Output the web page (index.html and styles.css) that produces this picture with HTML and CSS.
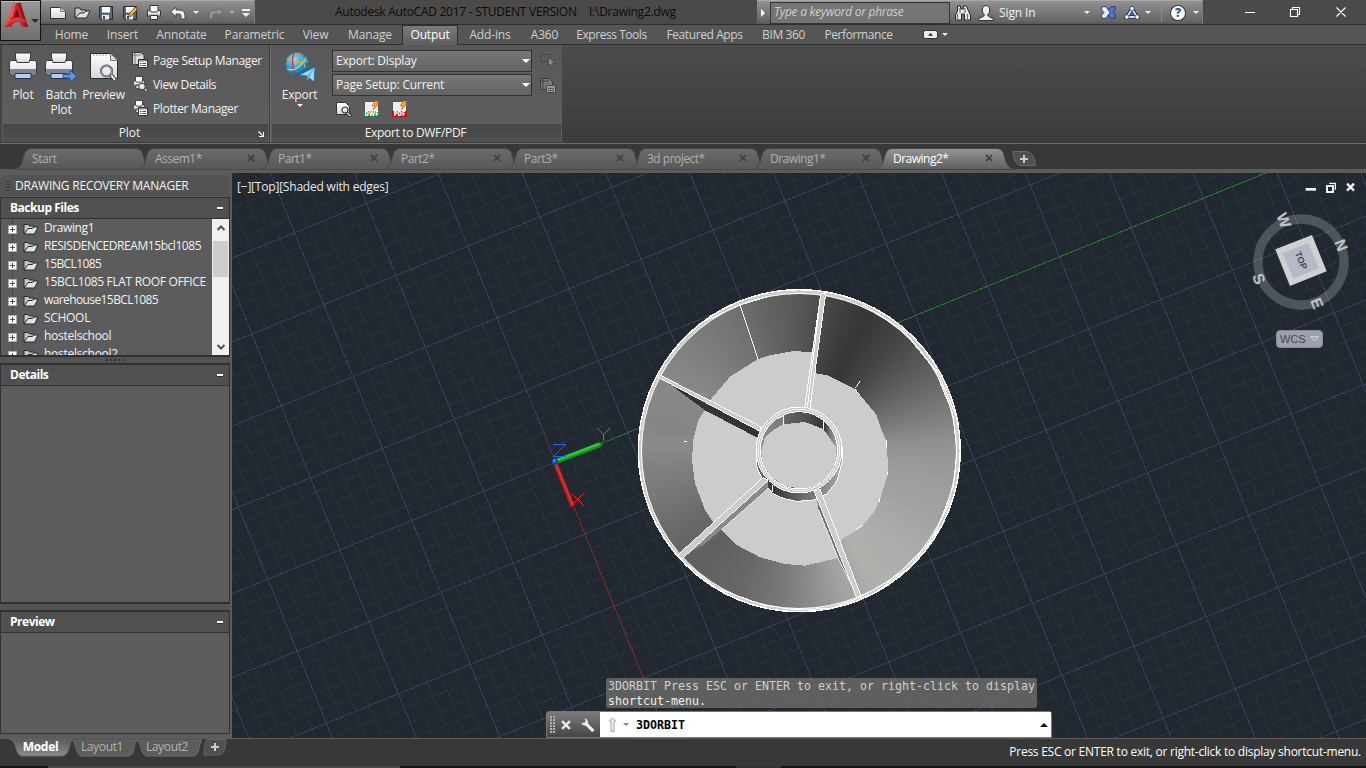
FILE: index.html
```html
<!DOCTYPE html>
<html lang="en">
<head>
<meta charset="utf-8">
<title>Autodesk AutoCAD 2017</title>
<link rel="stylesheet" href="styles.css">
</head>
<body>
<svg class="defs" width="0" height="0">
  <defs>
    <linearGradient id="paper" x1="0" y1="0" x2="0" y2="1"><stop offset="0" stop-color="#fff"/><stop offset="1" stop-color="#d4d6dc"/></linearGradient>
    <linearGradient id="tabfill" x1="0" y1="0" x2="0" y2="1"><stop offset="0" stop-color="#6b6b6b"/><stop offset="1" stop-color="#585858"/></linearGradient>
    <linearGradient id="tabon" x1="0" y1="0" x2="0" y2="1"><stop offset="0" stop-color="#959595"/><stop offset="1" stop-color="#5f5f5f"/></linearGradient>
    <linearGradient id="tabbot" x1="0" y1="0" x2="0" y2="1"><stop offset="0" stop-color="#5a5a5a"/><stop offset="1" stop-color="#8c8c8c"/></linearGradient>
    <symbol id="printer" viewBox="0 0 28 28">
      <path d="M2.500 8.500h23q2 0 2 2.500v9q0 3-3 3h-21q-3 0-3-3v-9q0-2.500 2-2.500z" fill="url(#paper)" stroke="#3a3a3a"/>
      <path d="M1 17h26v3q0 2.500-2.500 2.500h-21Q1 22.500 1 20z" fill="#7d868f"/>
      <path d="M6.500 1h15v5l-1.500 4.500H8L6.500 6z" fill="url(#paper)" stroke="#3a3a3a"/>
      <path d="M6 21.500h16v5H6z" fill="#b3cff7" stroke="#2c3440"/>
    </symbol>
    <symbol id="printer-s" viewBox="0 0 16 16">
      <path d="M1.500 5.500h13v6h-13z" fill="#e4e6ea" stroke="#333"/>
      <path d="M2 9.500h12v2H2z" fill="#8b939b"/>
      <path d="M4 .5h8v5l-1 1.500H5L4 5.500z" fill="#fff" stroke="#333"/>
      <path d="M4.500 10.500h7v4h-7z" fill="#e8f0ff" stroke="#333"/>
    </symbol>
    <symbol id="folder" viewBox="0 0 16 12">
      <path d="M1 11V1.500h4l1.500 1.500H11v3" fill="#c4c8ce" stroke="#26282c"/>
      <path d="M1.200 11 5 5.500h4L11 4h4l-3.500 7z" fill="#dde0e5" stroke="#26282c"/>
    </symbol>
    <symbol id="x" viewBox="0 0 9 9"><path d="M1 1l7 7M8 1l-7 7" stroke="currentColor" stroke-width="2"/></symbol>
  </defs>
</svg>

<div class="app">
  <header class="titlebar">
    <div class="qat">
      <svg class="ic" viewBox="0 0 16 16"><path d="M.5 2.500h10l5 4v7H.5z" fill="url(#paper)" stroke="#333"/><path d="M10.500 2.500v4h5" fill="#ccc" stroke="#777"/></svg>
      <svg class="ic" viewBox="0 0 16 16"><path d="M1 13V3h5l1 2h5v3" fill="#c8ccd2" stroke="#26282c"/><path d="M1 13 6 8h4l2-2h4l-3.500 7z" fill="#dfe2e7" stroke="#26282c"/></svg>
      <svg class="ic" viewBox="0 0 16 16"><path d="M1.500 1.500h13v13h-12l-1-1z" fill="#5a6678" stroke="#242a34"/><path d="M4 2h8v5.500H4z" fill="#fff"/><path d="M4 10h7v4.500H4z" fill="#e8eaee"/><path d="M5 11h2v3H5z" fill="#3a4454"/></svg>
      <svg class="ic" viewBox="0 0 16 16"><path d="M1.500 1.500h13v13h-12l-1-1z" fill="#5a6678" stroke="#242a34"/><path d="M4 2h8v5.500H4z" fill="#fff"/><path d="M4 10h7v4.500H4z" fill="#e8eaee"/><path d="M5 11h2v3H5z" fill="#3a4454"/><path d="M7 9.500 13 2l2.500 2L9.500 11 7 11.500z" fill="#f3b23c" stroke="#5c3d10" stroke-width=".8"/><path d="m13 2 1-1 2 1.600-.8 1.400z" fill="#c33"/></svg>
      <svg class="ic"><use href="#printer-s"/></svg>
      <svg class="ic" viewBox="0 0 16 16"><path d="M.8 6.500 6 2v3h4q5 .5 5 5v4h-4v-3q0-2-2-2H6v3z" fill="#eef0f3" stroke="#444"/></svg>
      <i class="car c1"></i>
      <svg class="ic redo" viewBox="0 0 16 16"><path d="M15.200 6.500 10 2v3H6q-5 .5-5 5v4h4v-3q0-2 2-2h3v3z" fill="#929292" stroke="#666"/></svg>
      <i class="car c2"></i>
      <span class="more"><b></b><i class="car"></i></span>
    </div>
    <div class="caption"><span class="cap1">Autodesk AutoCAD 2017 - STUDENT VERSION</span><span class="cap2">I:\Drawing2.dwg</span></div>
    <div class="infocenter">
      <i class="right-tri"></i>
      <div class="search">Type a keyword or phrase</div>
      <svg class="bino" viewBox="0 0 17 16"><path d="M3.500 1h3v3h3V1h3l2 5 2 4v5h-6V9h-3v6h-6v-5l2-4z" fill="#e8e8ea" stroke="#26282c"/><path d="M3.500 9v5M6 3v5M11 3v5M13.500 9v5" stroke="#6a6c70" stroke-width="1.200"/></svg>
      <svg class="user" viewBox="0 0 16 16"><path d="M8 .6q3.800 0 3.800 4.400 0 3-2 4.600v1q.8 1.200 5.600 3v2H.6v-2q4.800-1.800 5.600-3v-1q-2-1.600-2-4.600Q4.200.6 8 .6z" fill="#eceef4" stroke="#26282c"/></svg>
      <span class="sign">Sign In</span>
      <i class="car c3"></i>
      <svg class="exch" viewBox="0 0 15 13"><path d="M14.300.7H10L5 6.500l5 5.800h4.300V9L12 6.500 14.300 4z" fill="#4a78d0" stroke="#1c3472" stroke-width=".9"/><path d="M.7.7H5l4 5.800-4 5.800H.7V9L3 6.500.7 4z" fill="#eceef6" stroke="#1c3472" stroke-width=".9"/></svg>
      <svg class="a360" viewBox="0 0 16 14"><path d="M8 3 3 11h10z" fill="none" stroke="#26356a" stroke-width="4"/><path d="M8 3 3 11h10z" fill="none" stroke="#dfe3f2" stroke-width="1.800"/><circle cx="8" cy="2.600" r="2.200" fill="#fff" stroke="#26356a" stroke-width=".8"/><circle cx="2.800" cy="11" r="2.200" fill="#fff" stroke="#26356a" stroke-width=".8"/><circle cx="13.200" cy="11" r="2.200" fill="#fff" stroke="#26356a" stroke-width=".8"/></svg>
      <i class="car c4"></i>
      <b class="sep"></b>
      <span class="help">?</span>
      <i class="car c5"></i>
    </div>
    <div class="winbtns">
      <svg viewBox="0 0 102 12"><path d="M0 6.500h10M45.500 3.500h7v7h-7zM47.500 3.500v-2h7v7h-2M91.500 1.500l9 9M100.500 1.500l-9 9" fill="none" stroke="#fff" stroke-width="1.100"/></svg>
    </div>
  </header>

  <nav class="ribbon-tabs">
    <span>Home</span><span>Insert</span><span>Annotate</span><span>Parametric</span><span>View</span><span>Manage</span><span class="on">Output</span><span>Add-ins</span><span>A360</span><span>Express Tools</span><span>Featured Apps</span><span>BIM 360</span><span>Performance</span>
    <svg class="mini" viewBox="0 0 15 9"><rect x=".5" y=".5" width="14" height="8" rx="2" fill="#eceef2" stroke="#2c3038"/><path d="M5 5.800h5L7.500 3z" fill="#222"/></svg><i class="car"></i>
  </nav>

  <section class="ribbon">
    <div class="panel plot">
      <div class="pbody">
        <div class="big b1"><svg><use href="#printer"/></svg><span>Plot</span></div>
        <div class="big b2"><svg viewBox="0 0 32 30"><use href="#printer" x="0" y="0" width="28" height="28"/><path d="M18 22.500h7v-4.500l6.500 6.500-6.500 6v-4.500h-7z" fill="#5a98f5" stroke="#24407a" stroke-width=".8"/></svg><span>Batch<br>Plot</span></div>
        <div class="big b3"><svg viewBox="0 0 28 28"><path d="M.5 1.500h20l7 7v18H.5z" fill="url(#paper)" stroke="#2b2b2b"/><path d="M20.500 1.500v7h7" fill="#ddd" stroke="#777"/><path d="M4 2v2M7 2v2M10 2v2M13 2v2M16 2v2" stroke="#999"/><path d="m20 22 5 6" stroke="#333" stroke-width="4"/><path d="m20 22 5 6" stroke="#eee" stroke-width="2"/><circle cx="16.500" cy="19" r="5.500" fill="#e3eaf3" stroke="#3a3a3a" stroke-width="2"/><circle cx="16.500" cy="19" r="5.500" fill="none" stroke="#ccc" stroke-width=".8"/></svg><span>Preview</span></div>
        <ul class="cmds">
          <li><svg viewBox="0 0 16 16"><path d="M.5.5H9l3 3v9H.5z" fill="#d9dbe0" stroke="#333"/><path d="M3 1v12M1 3h8" stroke="#777"/><path d="M6.500 7.500h9v8h-9z" fill="#fff" stroke="#333"/><path d="M7 8h8v1.500H7z" fill="#7c8aa0"/><path d="M8 11.500h1.500M8 13.500h1.500M10.500 11.500H14M10.500 13.500H14" stroke="#445"/></svg><span class="w1">Page Setup Manager</span></li>
          <li><svg viewBox="0 0 16 16"><use href="#printer-s" width="14" height="14"/><path d="m12 12 3.500 3.500" stroke="#222" stroke-width="2.500"/><path d="m12 12 3 3" stroke="#eee" stroke-width="1.200"/><circle cx="10" cy="10.500" r="3.300" fill="#e3eaf3" stroke="#333"/></svg><span class="w2">View Details</span></li>
          <li><svg viewBox="0 0 16 16"><use href="#printer-s" width="14" height="14"/><path d="M6.500 7.500h9v8h-9z" fill="#fff" stroke="#333"/><path d="M7 8h8v1.500H7z" fill="#7c8aa0"/><path d="M8 11.500h1.500M8 13.500h1.500M10.500 11.500H14M10.500 13.500H14" stroke="#445"/></svg><span class="w3">Plotter Manager</span></li>
        </ul>
      </div>
      <div class="ptitle"><span>Plot</span><svg class="launch" viewBox="0 0 6 6"><path d="M.5.5l4 4M5.500 1v4.500H1" fill="none" stroke="#fff" stroke-width="1.200"/></svg></div>
    </div>
    <div class="panel export">
      <div class="pbody">
        <div class="big b4"><svg viewBox="0 0 30 30"><defs><radialGradient id="globe" cx=".35" cy=".3" r=".8"><stop offset="0" stop-color="#8fdcf8"/><stop offset=".5" stop-color="#2d9fdc"/><stop offset="1" stop-color="#0d4f8c"/></radialGradient></defs><circle cx="12.500" cy="12" r="11.500" fill="url(#globe)"/><path d="M2 6q9 7 21 3" fill="none" stroke="#f6a02c" stroke-width="1.300"/><path d="M9 1q-4 11 2 22" fill="none" stroke="#e02a2a" stroke-width="1.400"/><path d="M2 17q10 4 19-11" fill="none" stroke="#d8e23c" stroke-width="1.300"/><path d="M9 2Q18 0 20 16" fill="none" stroke="#f6a02c"/><path d="M30 15 14 23l8 1 7 6z" fill="#9bdcf5" stroke="#1b6c9c" stroke-width=".8"/><path d="m30 15-8 9v5z" fill="#4fb4e0"/></svg><span>Export</span><i class="car"></i></div>
        <div class="combos">
          <div class="row"><div class="combo"><span class="w4">Export: Display</span><i class="car"></i></div><svg viewBox="0 0 16 16"><path d="M.5 1.500h10v7H.5z" fill="none" stroke="#3e3e3e" stroke-dasharray="2 1"/><path d="M8.500 4v9l2-2 1.500 3.500 1.500-.7L12 10.500h3z" fill="#8c8c8c" stroke="#484848" stroke-width=".8"/></svg></div>
          <div class="row"><div class="combo"><span class="w5">Page Setup: Current</span><i class="car"></i></div><svg viewBox="0 0 16 16"><path d="M.5 1.500h9l3 3v8H.5z" fill="#777" stroke="#3e3e3e"/><path d="M3 2v11M1 4h8" stroke="#444"/><path d="M6.500 8.500h9v7h-9z" fill="#999" stroke="#484848"/><path d="M8 11.500h6M8 13.500h6" stroke="#555"/></svg></div>
          <div class="row small">
            <svg viewBox="0 0 16 16"><path d="M.5 1.500h9l4 4v8H.5z" fill="url(#paper)" stroke="#333"/><path d="m10 11 5 4.500" stroke="#222" stroke-width="2.500"/><path d="m10 11 4.500 4" stroke="#eee" stroke-width="1.200"/><circle cx="9" cy="9" r="3" fill="#e3eaf3" stroke="#333" stroke-width="1.200"/></svg>
            <svg viewBox="0 0 16 16"><path d="M.5.5h14v10H.5z" fill="#eee" stroke="#555"/><path d="m11 0-3 5h3l-2 4 6-6h-3l3-3z" fill="#f7a928" stroke="#a85f10" stroke-width=".6"/><path d="M0 10h15v6H0z" fill="#16794a"/><text x="7.500" y="15.200" font-size="6" class="tag">DWF</text></svg>
            <svg viewBox="0 0 16 16"><path d="M.5.5h14v10H.5z" fill="#eee" stroke="#555"/><path d="m11 0-3 5h3l-2 4 6-6h-3l3-3z" fill="#f7a928" stroke="#a85f10" stroke-width=".6"/><path d="M0 10h15v6H0z" fill="#c00d12"/><text x="7.500" y="15.200" font-size="6" class="tag">PDF</text></svg>
          </div>
        </div>
      </div>
      <div class="ptitle"><span class="w6">Export to DWF/PDF</span></div>
    </div>
  </section>

  <div class="appmenu">
    <svg viewBox="0 0 24 28"><path d="M0 25 8.500 1h7L23 25h-6.500l-1.400-5q-3.600-1-7.200 2L6.500 25z" fill="#c8252b"/><path d="M0 25 8.500 1H11L7.600 14z" fill="#ea5a58"/><path d="M9 16l3-9.500 2.300 8.500q-3-.6-5.300 1z" fill="#6e1015"/><path d="m15.500 1 7.500 24h-3L13 1z" fill="#93161b"/><path d="M3 20q7-7 17-2l.6 2.500Q11 16.500 2 23z" fill="#dc3a3a"/></svg>
    <i class="car"></i>
  </div>

  <div class="doctabs">
    <div class="dt"><svg class="shape" viewBox="0 0 140 24"><path class="tp" d="M0 23.500C8 22 8 16 10 9Q12 2.500 17 2.500H121Q128 2.500 129 9C131 17 133 22 140 23.500z"/></svg><span class="t0">Start</span></div>
    <div class="dt"><svg class="shape" viewBox="0 0 140 24"><path class="tp" d="M0 23.500C8 22 8 16 10 9Q12 2.500 17 2.500H121Q128 2.500 129 9C131 17 133 22 140 23.500z"/></svg><span>Assem1*</span><svg class="cl"><use href="#x"/></svg></div>
    <div class="dt"><svg class="shape" viewBox="0 0 140 24"><path class="tp" d="M0 23.500C8 22 8 16 10 9Q12 2.500 17 2.500H121Q128 2.500 129 9C131 17 133 22 140 23.500z"/></svg><span>Part1*</span><svg class="cl"><use href="#x"/></svg></div>
    <div class="dt"><svg class="shape" viewBox="0 0 140 24"><path class="tp" d="M0 23.500C8 22 8 16 10 9Q12 2.500 17 2.500H121Q128 2.500 129 9C131 17 133 22 140 23.500z"/></svg><span>Part2*</span><svg class="cl"><use href="#x"/></svg></div>
    <div class="dt"><svg class="shape" viewBox="0 0 140 24"><path class="tp" d="M0 23.500C8 22 8 16 10 9Q12 2.500 17 2.500H121Q128 2.500 129 9C131 17 133 22 140 23.500z"/></svg><span>Part3*</span><svg class="cl"><use href="#x"/></svg></div>
    <div class="dt"><svg class="shape" viewBox="0 0 140 24"><path class="tp" d="M0 23.500C8 22 8 16 10 9Q12 2.500 17 2.500H121Q128 2.500 129 9C131 17 133 22 140 23.500z"/></svg><span>3d project*</span><svg class="cl"><use href="#x"/></svg></div>
    <div class="dt"><svg class="shape" viewBox="0 0 140 24"><path class="tp" d="M0 23.500C8 22 8 16 10 9Q12 2.500 17 2.500H121Q128 2.500 129 9C131 17 133 22 140 23.500z"/></svg><span>Drawing1*</span><svg class="cl"><use href="#x"/></svg></div>
    <div class="dt active"><svg class="shape" viewBox="0 0 140 24"><path class="tp" d="M0 23.500C8 22 8 16 10 9Q12 2.500 17 2.500H121Q128 2.500 129 9C131 17 133 22 140 23.500z"/></svg><span>Drawing2*</span><svg class="cl"><use href="#x"/></svg></div>
    <svg class="newtab" viewBox="0 0 24 15"><path d="M1 .5h14q7 1 8.500 14H8Q2 13 1 .5z" fill="#4f4f4f" stroke="#6a6a6a"/><path d="M12 4v8M8 8h8" stroke="#ccc" stroke-width="2"/></svg>
  </div>

  <main class="work">
    <aside class="palette">
      <div class="phead"><i class="grip"></i><span>DRAWING RECOVERY MANAGER</span></div>
      <div class="sec"><b>Backup Files</b><i></i></div>
      <div class="list">
        <ul>
          <li><em></em><svg><use href="#folder"/></svg><span class="l1">Drawing1</span></li>
          <li><em></em><svg><use href="#folder"/></svg><span class="l2">RESISDENCEDREAM15bcl1085</span></li>
          <li><em></em><svg><use href="#folder"/></svg><span class="l3">15BCL1085</span></li>
          <li><em></em><svg><use href="#folder"/></svg><span class="l4">15BCL1085 FLAT ROOF OFFICE</span></li>
          <li><em></em><svg><use href="#folder"/></svg><span class="l5">warehouse15BCL1085</span></li>
          <li><em></em><svg><use href="#folder"/></svg><span class="l6">SCHOOL</span></li>
          <li><em></em><svg><use href="#folder"/></svg><span class="l7">hostelschool</span></li>
          <li><em></em><svg><use href="#folder"/></svg><span class="l8">hostelschool2</span></li>
        </ul>
        <div class="scroll">
          <svg viewBox="0 0 16 22"><path d="M4.500 11 8 7.500 11.500 11" fill="none" stroke="#505050" stroke-width="2"/></svg>
          <b></b>
          <svg class="dn" viewBox="0 0 16 22"><path d="M4.500 12 8 15.500 11.500 12" fill="none" stroke="#505050" stroke-width="2"/></svg>
        </div>
      </div>
      <div class="split"><i></i></div>
      <div class="sec"><b>Details</b><i></i></div>
      <div class="blank details"></div>
      <div class="split"></div>
      <div class="sec"><b>Preview</b><i></i></div>
      <div class="blank preview"></div>
    </aside>

    <div class="canvas">
      <svg class="layer" viewBox="232 173 1134 565" shape-rendering="crispEdges">
        <g id="minor" stroke="#29313c"></g>
        <g id="major" stroke="#393f58"></g>
        <path d="M555.700 462 1290 163" stroke="#23792a"/>
        <path d="M555.700 462 667.500 738" stroke="#7c2328"/>
        <circle cx="799.300" cy="450.700" r="161" fill="#cbcccb" stroke="#fff" stroke-width="1.500"/>
      </svg>
      <div class="cone"></div>
      <svg class="layer" viewBox="232 173 1134 565">
        <defs>
          <linearGradient id="hubout" x1="0" x2="1"><stop offset="0" stop-color="#777"/><stop offset=".18" stop-color="#333"/><stop offset=".55" stop-color="#6c6c6c"/><stop offset="1" stop-color="#a8a8a8"/></linearGradient>
          <linearGradient id="hubin" x1="0" x2="1"><stop offset="0" stop-color="#8c8c8c"/><stop offset=".3" stop-color="#7a7a7a"/><stop offset=".32" stop-color="#666"/><stop offset=".65" stop-color="#4a4a4a"/><stop offset=".82" stop-color="#303030"/><stop offset=".9" stop-color="#777"/><stop offset="1" stop-color="#aaa"/></linearGradient>
        </defs>
        <g transform="translate(530 280) scale(.333333)" shape-rendering="crispEdges">
          <path d="M1040 98 1130 165 1215 270 1268 400 1281 512 1270 620 1215 765 1140 860 1060 920M1000 75 1120 150 1225 280 1275 400M1262 660 1200 790 1088 896 985 955M440 195 520 125 630 75 720 48M460 845 560 925 700 975 800 990 900 985 985 955" fill="none" stroke="#fff" stroke-width="3"/>
          <path d="M684 237 720 226 790 213 848 217 858 280 893 286 940 310 975 327 990 345 1040 405 1055 450 1070 485 1075 575 1050 660 1030 700 985 748 935 778 925 834 825 857 765 852 690 832 620 795 573 750 548 725 525 690 495 610 486 540 490 480 505 420 525 390 545 355 600 290z" fill="#cbcdcc"/>
          <path d="M630 75 684 237M976 325 990 303M1070 480v20M1074 575v10M1050 655v12M978 748l22-12M462 485h9M492 800l20-4M975 327l14 18" fill="none" stroke="#fff" stroke-width="3"/>
          <path d="M400 298 690 450 682 473 525 391 470 350z" fill="#343434"/>
          <path d="M680 560 700 605 728 640 760 655 800 664 850 660 890 642 920 605 937 545 937 500 680 520z" fill="url(#hubout)" stroke="#fff" stroke-width="3"/>
          <path d="M712 606v22M728 615v22" stroke="#fff" stroke-width="3"/>
          <path d="M715 605 712 628 573 750 520 795 470 820 700 600z" fill="#888a89"/>
          <path d="M858 640 866 690 930 845 985 945 870 640z" fill="#6f706f"/>
          <path d="M712 628 573 750M866 690 925 835 980 945" fill="none" stroke="#fff" stroke-width="2"/>
          <path d="M388 284 694 441 688 453 384 292z" fill="#cbcccb" stroke="#fff" stroke-width="3"/>
          <path d="M872 42 887 42 840 385 824 383z" fill="#cbcccb" stroke="#fff" stroke-width="3"/>
          <path d="M856 270 840 383M866 100 832 383" stroke="#fff" stroke-width="3"/>
          <path d="M700 592 714 602 457 836 443 825z" fill="#cbcccb" stroke="#fff" stroke-width="3"/>
          <path d="M853 634 870 628 992 945 980 953z" fill="#cbcccb" stroke="#fff" stroke-width="3"/>
          <circle cx="807" cy="510" r="129" fill="#cbcccb" stroke="#fff" stroke-width="3"/>
          <circle cx="807" cy="510" r="122" fill="none" stroke="#fff" stroke-width="2"/>
          <circle cx="807" cy="511" r="116" fill="url(#hubin)" stroke="#fff" stroke-width="3"/>
          <path d="M693 515 705 472 730 450 760 433 825 426 880 447 900 475 917 500 920 525 910 565 880 602 845 622 807 625 765 618 725 592 700 555z" fill="#cbcdcc"/>
          <path d="M760 404v30M880 418v30" fill="none" stroke="#fff" stroke-width="3"/>
        </g>
        <g transform="translate(540 420) scale(.333333)" fill="none">
          <g>
            <path d="M50 124 180 74" stroke="#12801a" stroke-width="16"/><path d="M50 122 180 72" stroke="#23a42a" stroke-width="11"/><path d="M52 120 178 71" stroke="#4be04c" stroke-width="3"/>
            <path d="m180 66 8 5-5 11z" fill="#1a9a20"/>
            <path d="M46 130 99 260" stroke="#7c1418" stroke-width="16"/><path d="M46 130 98 258" stroke="#b3262a" stroke-width="11"/><path d="M47 130 99 256" stroke="#cc3c3e" stroke-width="4"/>
          </g>
          <circle cx="45" cy="125" r="9.500" fill="#1747a8"/><circle cx="43" cy="122" r="4" fill="#4a8af0"/>
          <g stroke-width="3" shape-rendering="crispEdges"><path d="M40 73h37L40 109h37" stroke="#1764ff"/><path d="m172 25 18 18 18-18M190 43v19" stroke="#1fae24"/><path d="m94 220 37 37M131 220l-37 37" stroke="#ff2222"/></g>
        </g>
        <g transform="translate(1200 170) scale(.333333)">
          <circle cx="303" cy="276" r="129" fill="none" stroke="#fff" stroke-opacity=".2" stroke-width="28"/>
          <path d="M226 238 336 195 380 304 270 348z" fill="#cfd0d0"/>
          <path d="M247 250 325 219 357 295 280 325z" fill="#b6b9c6"/>
          <g class="cube" fill="#c3c4c6">
            <text transform="translate(303 271) rotate(68)" y="9" class="top">TOP</text>
            <text transform="translate(252 151) rotate(68)" y="17">W</text>
            <text transform="translate(424 225) rotate(68)" y="17">N</text>
            <text transform="translate(178 326) rotate(68)" y="17">S</text>
            <text transform="translate(352 400) rotate(68)" y="17">E</text>
          </g>
          <g fill="none" stroke="#f2f2f2"><path d="M317 58h31" stroke-width="8"/><path d="M381 48h18v18h-18z" stroke-width="6"/><path d="M387 40h19v19" stroke-width="4"/><path d="m441 41 21 21M462 41l-21 21" stroke-width="7"/></g>
        </g>
      </svg>
      <div class="vlabel">[−][Top][Shaded with edges]</div>
      <div class="wcs"><span>WCS</span><svg viewBox="0 0 9 6"><path d="M.7.700h7.600L4.500 5z" fill="none" stroke="#d5d6de"/></svg></div>
      <div class="history"><p>3DORBIT Press ESC or ENTER to exit, or right-click to display</p><p>shortcut-menu.</p></div>
      <div class="cmdline">
        <div class="cmdtools">
          <i class="dots"></i>
          <svg class="cx" viewBox="0 0 9 9"><use href="#x"/></svg>
          <svg class="wrench" viewBox="0 0 14 15"><path d="M3.500.8 5 3.500 4 5.500 1 5Q1.500 8.500 5.500 8.500l6 6 2.300-2.300-6-6Q8 1.500 3.500.8z" fill="#f0f0f0" stroke="#444" stroke-width=".4"/></svg>
        </div>
        <div class="cmdinput">
          <svg class="pr" viewBox="0 0 9 16"><path d="M4.500.8 7.800 4H6v10.500H3V4H1.200z" fill="#eee" stroke="#a5a5a5"/></svg>
          <i class="car"></i><b>3DORBIT</b><i class="up"></i>
        </div>
      </div>
    </div>
  </main>

  <footer class="status">
    <div class="ltabs">
      <div class="lt m on"><svg viewBox="0 0 62 18"><path d="M0 0Q4 1 6 9q2 8 6 8h40q5 0 7-8 1-6 3-9z"/></svg><span>Model</span></div>
      <div class="lt"><svg viewBox="0 0 66 18"><path d="M0 1Q3 1 5 9q2 8 6 8h46q5 0 6-8 1-6 3-8z"/></svg><span>Layout1</span></div>
      <div class="lt"><svg viewBox="0 0 66 18"><path d="M0 1Q3 1 5 9q2 8 6 8h46q5 0 6-8 1-6 3-8z"/></svg><span>Layout2</span></div>
      <svg class="plus" viewBox="0 0 24 17"><path d="M4 .5h19q0 14-7 15.500H1Q1 5 4 .500z" fill="#4f4f4f" stroke="#666"/><path d="M12 4v8M8 8h8" stroke="#ccc" stroke-width="2"/></svg>
    </div>
    <div class="msg">Press ESC or ENTER to exit, or right-click to display shortcut-menu.</div>
  </footer>
  <div class="edge"><i></i><b></b><i class="e2"></i><b class="e3"></b></div>
</div>
<script src="grid.js"></script>
</body>
</html>
```
FILE: styles.css
```css
* { box-sizing: border-box; }
body { margin: 0; background: #383838; font-family: "Open Sans", "Noto Sans", sans-serif; font-size: 12px; color: #f2f2f2; }
ul, p { margin: 0; padding: 0; list-style: none; }
svg { display: block; flex: none; }
.defs { position: absolute; }
.app { position: relative; width: 1366px; height: 768px; display: flex; flex-direction: column; overflow: hidden; white-space: nowrap; }
.car { display: block; flex: none; width: 0; height: 0; border: 3px solid transparent; border-top-color: #eee; border-bottom: 0; }

.titlebar { height: 24px; flex: none; background: #4b4a48; display: flex; }
.qat { margin-left: 41px; width: 214px; height: 24px; display: flex; align-items: center; padding-left: 9px; border-top: 1px solid #a8a8a8; border-right: 1px solid #7c7c7c; background: linear-gradient(#929292, #646464 90%, #555); }
.ic { width: 16px; height: 16px; margin-right: 8px; }
.qat .ic:nth-child(6) { margin-right: 7px; }
.c1 { margin-right: 9px; }
.qat .redo { margin-right: 5px; }
.c2 { border-top-color: #aaa; margin-right: 7px; }
.more b { display: block; width: 8px; height: 2px; background: #eee; margin-bottom: 2px; }
.more .car { border-width: 4px 4px 0; }
.caption { width: 502px; padding-left: 80px; color: #0b0b0b; display: flex; line-height: 24px; }
.cap1 { width: 254px; letter-spacing: -.27px; }
.cap2 { letter-spacing: -.25px; }
.infocenter { width: 446px; height: 24px; display: flex; align-items: center; border-top: 1px solid #a8a8a8; border-right: 1px solid #7c7c7c; background: linear-gradient(#929292, #646464 90%, #555); }
.right-tri { border: 4px solid transparent; border-left-color: #fff; border-right: 0; margin: 0 5px 0 4px; }
.search { width: 180px; height: 22px; background: #747474; border: 1px solid #333; color: #cfcfcf; font-style: italic; line-height: 18px; padding-left: 3px; letter-spacing: -.28px; }
.bino { width: 17px; height: 16px; margin-left: 4px; }
.user { width: 16px; height: 16px; margin-left: 7px; }
.sign { margin-left: 5px; width: 85px; letter-spacing: -.1px; }
.exch { width: 15px; height: 13px; margin-left: 11px; }
.a360 { width: 16px; height: 14px; margin: 0 5px 0 8px; }
.sep { width: 1px; height: 18px; background: #8c8c8c; margin: 0 9px 0 10px; }
.help { width: 14px; height: 14px; border-radius: 50%; background: #fff; box-shadow: 0 0 0 1px #333; color: #2457b8; font-weight: 800; text-align: center; line-height: 14px; font-size: 12px; margin-right: 8px; }
.winbtns { margin-left: 42px; display: flex; align-items: center; }
.winbtns svg { width: 102px; height: 12px; }

.ribbon-tabs { height: 21px; flex: none; border-top: 1px solid #2e2e2e; border-bottom: 1px solid #2e2e2e; background: #555; display: flex; align-items: center; padding-left: 45px; color: #d0d0d0; }
.ribbon-tabs span { height: 20px; line-height: 20px; text-align: center; display: flex; justify-content: center; letter-spacing: -.15px; }
.ribbon-tabs span:nth-child(1) { width: 53px; }
.ribbon-tabs span:nth-child(2) { width: 49px; }
.ribbon-tabs span:nth-child(3) { width: 69px; }
.ribbon-tabs span:nth-child(4) { width: 77px; }
.ribbon-tabs span:nth-child(5) { width: 45px; }
.ribbon-tabs span:nth-child(6) { width: 64px; }
.ribbon-tabs span:nth-child(7) { width: 56px; }
.ribbon-tabs span:nth-child(8) { width: 64px; }
.ribbon-tabs span:nth-child(9) { width: 45px; }
.ribbon-tabs span:nth-child(10) { width: 89px; letter-spacing: -.45px; }
.ribbon-tabs span:nth-child(11) { width: 97px; letter-spacing: -.4px; }
.ribbon-tabs span:nth-child(12) { width: 61px; letter-spacing: -.4px; }
.ribbon-tabs span:nth-child(13) { width: 89px; letter-spacing: -.4px; }
.ribbon-tabs .on { color: #fff; background: linear-gradient(#7a7a7a, #5e5e5e); border: 1px solid #2e2e2e; border-bottom: 0; line-height: 18px; }
.mini { width: 15px; height: 9px; margin: 0 4px 0 20px; }

.ribbon { height: 99px; flex: none; background: linear-gradient(#4c4c4c, #3b3b3b); display: flex; border-bottom: 1px solid #6e6e6e; }
.panel { display: flex; flex-direction: column; height: 97px; background: linear-gradient(#595959, #5f5f5f); }
.plot { width: 270px; border-left: 2px solid #444; border-right: 1px solid #404040; }
.export { width: 292px; border-left: 1px solid #6a6a6a; }
.pbody { height: 79px; flex: none; display: flex; }
.ptitle { height: 18px; flex: none; background: linear-gradient(#464646, #505050); display: flex; justify-content: center; align-items: center; margin: 0 1px; position: relative; line-height: 18px; }
.plot .ptitle { padding-right: 12px; }
.export .ptitle { padding-right: 2px; }
.launch { position: absolute; right: 4px; bottom: 5px; width: 6px; height: 6px; }
.big { display: flex; flex-direction: column; align-items: center; line-height: 15px; text-align: center; padding-top: 7px; letter-spacing: -.2px; }
.big svg { width: 28px; height: 28px; margin-bottom: 7px; }
.b1 { width: 42px; }
.b2 { width: 34px; }
.b2 svg { width: 32px; height: 30px; margin-bottom: 5px; }
.b3 { width: 51px; }
.b4 { width: 57px; }
.b4 svg { width: 30px; height: 30px; margin-bottom: 5px; }
.b4 .car { margin-top: 2px; }
.cmds { padding: 3px 0 0 3px; }
.cmds li { height: 24px; display: flex; align-items: center; }
.cmds svg { width: 16px; height: 16px; margin-right: 5px; }
.w1 { letter-spacing: -.36px; }
.w2 { letter-spacing: -.36px; }
.w3 { letter-spacing: -.36px; }
.combos { padding: 4px 0 0 4px; }
.row { display: flex; height: 24px; align-items: center; }
.row > svg { width: 16px; height: 16px; margin-left: 8px; }
.combo { width: 200px; height: 22px; border: 1px solid #323232; background: linear-gradient(#787878, #626262); display: flex; align-items: center; justify-content: space-between; padding: 0 1px 0 3px; line-height: 18px; }
.combo .car { border-width: 4px 4px 0; border-top-color: #fff; }
.w4 { letter-spacing: -.42px; }
.w4, .w5 { letter-spacing: -.2px; }
.small > svg { margin: 0 8px 0 4px; }
.small > svg + svg { margin: 0 8px 0 4px; }
.tag { fill: #fff; font-family: "Open Sans", sans-serif; font-weight: 800; text-anchor: middle; }
.w6 { letter-spacing: -.32px; }

.appmenu { position: absolute; left: 0; top: 0; width: 41px; height: 41px; border: 1px solid #111; background: linear-gradient(#979797, #6e6e6e); box-shadow: inset 0 1px #bbb; display: flex; align-items: center; padding-left: 4px; }
.appmenu svg { width: 24px; height: 28px; margin: -9px 2px 0 0; }
.appmenu .car { border-width: 4px 4px 0; border-top-color: #2e2e2e; }

.doctabs { height: 29px; flex: none; display: flex; background: #383838; border-bottom: 4px solid #5c5c5c; padding: 2px 0 0 14px; }
.dt { position: relative; width: 123px; height: 24px; padding: 0 12px 0 18px; display: flex; align-items: center; justify-content: space-between; color: #b0b0b0; letter-spacing: -.5px; }
.dt .t0 { letter-spacing: -.4px; }
.dt span, .dt .cl { position: relative; }
.dt .cl { width: 8px; height: 8px; color: #424242; margin-right: -10px; left: -3px; }
.shape { position: absolute; left: 0; top: 0; width: 140px; height: 24px; }
.tp { fill: url(#tabfill); stroke: #484848; }
.active { color: #fff; }
.active .tp { fill: url(#tabon); stroke: #444; }
.newtab { width: 24px; height: 15px; margin: 5px 0 0 14px; }

.work { height: 565px; flex: none; display: flex; }
.palette { width: 232px; flex: none; background: #5c5c5c; display: flex; flex-direction: column; padding-right: 2px; }
.phead { height: 21px; margin: 2px 0 1px; background: #535353; border-radius: 6px 6px 0 0; display: flex; align-items: center; padding-left: 6px; letter-spacing: -.22px; line-height: 21px; }
.grip { width: 4px; height: 10px; margin-right: 5px; background: repeating-linear-gradient(#3a3a3a 0 1px, transparent 1px 3px); }
.sec { height: 22px; flex: none; border: 1px solid #323232; background: #505050; display: flex; align-items: center; justify-content: space-between; padding: 0 6px 0 9px; }
.sec b { font-weight: 700; letter-spacing: -.48px; line-height: 20px; color: #fff; }
.sec i { width: 6px; height: 2px; background: #fff; box-shadow: 0 1px #333; }
.list { height: 137px; flex: none; display: flex; border: 1px solid #323232; border-top: 0; overflow: hidden; }
.list ul { flex: 1; padding-left: 7px; background: repeating-linear-gradient(#2e2e2e 0 1px, transparent 1px 2px) 11px 0 / 1px 100% no-repeat; }
.list li { height: 18px; display: flex; align-items: center; line-height: 18px; }
.list em { width: 9px; height: 9px; background: linear-gradient(#34508c, #34508c) center / 5px 1px no-repeat, linear-gradient(#34508c, #34508c) center / 1px 5px no-repeat, #fff; margin: 3px 6px 0 0; border: 1px solid #aaa; }
.list svg { width: 16px; height: 12px; margin: 1px 5px 0 0; }
.l1 { letter-spacing: -.4px; }
.l2 { letter-spacing: -.44px; }
.l3 { letter-spacing: -.62px; }
.l4 { letter-spacing: -.33px; }
.l5 { letter-spacing: -.6px; }
.l6 { letter-spacing: -.3px; }
.l7, .l8 { letter-spacing: -.28px; }
.scroll { width: 17px; background: #f0f0f0; display: flex; flex-direction: column; align-items: center; }
.list .scroll svg { width: 16px; height: 22px; margin: 0; }
.scroll b { width: 15px; height: 36px; background: #cdcdcd; }
.list .scroll .dn { margin-top: auto; }
.split { height: 8px; flex: none; background: #535353; border-top: 1px solid #2e2e2e; border-bottom: 1px solid #2e2e2e; display: flex; justify-content: center; align-items: center; }
.split i { width: 18px; height: 2px; background: repeating-linear-gradient(90deg, #333 0 2px, transparent 2px 4px); }
.blank { border: 1px solid #323232; border-top: 0; }
.details { height: 217px; }
.preview { height: 101px; }

.canvas { position: relative; width: 1134px; height: 565px; background: #212830; overflow: hidden; }
.layer { position: absolute; left: 0; top: 0; width: 1134px; height: 565px; }
.cone { position: absolute; left: 409px; top: 120px; width: 316px; height: 316px; border-radius: 50%; border: 1px solid #fff;
  background: conic-gradient(#575757 0deg, #4a4a4a 9deg, #3e3e3e 18deg, #363636 27deg, #464646 42deg, #626262 60deg, #7c7c7c 75deg, #909090 86deg, #9b9c9b 100deg, #a3a4a2 118deg, #adaeab 135deg, #afb1ad 150deg, #a0a1a0 164deg, #8c8c8c 175deg, #777 188deg, #666 205deg, #606060 222deg, #696969 237deg, #777 252deg, #828282 265deg, #8a8a8a 272deg, #858585 280deg, #888 300deg, #7c7d7d 318deg, #707272 335deg, #636565 346deg, #575757 360deg); }
.vlabel { position: absolute; left: 5px; top: 5px; line-height: 17px; letter-spacing: -.2px; color: #e8e8e8; }
.cube text { font-family: "Liberation Sans", sans-serif; font-weight: 700; font-size: 47px; text-anchor: middle; }
.cube .top { font-size: 27px; fill: #474b55; }
.wcs { position: absolute; left: 1044px; top: 157px; width: 47px; height: 18px; border-radius: 4px; background: #9ea0b0; border: 1px solid #868896; display: flex; align-items: center; color: #45474f; padding-left: 3px; font-family: "Liberation Sans", sans-serif; font-size: 11px; }
.wcs span { width: 30px; line-height: 14px; padding-bottom: 1px; }
.wcs svg { width: 9px; height: 6px; }
.history { position: absolute; left: 374px; top: 505px; width: 431px; height: 30px; border-radius: 2px; background: rgba(100, 100, 100, .92); padding: 1px 2px; font-family: "DejaVu Sans Mono", monospace; font-size: 11.630px; line-height: 15px; color: #cfcfcf; }
.history p + p { color: #f0f0f0; }
.cmdline { position: absolute; left: 314px; top: 538px; width: 506px; height: 27px; display: flex; border: 1px solid #777; border-radius: 3px 3px 0 0; }
.cmdtools { width: 53px; background: linear-gradient(#7c7c7c, #454545); display: flex; align-items: center; padding-left: 3px; }
.dots { width: 5px; height: 17px; background: linear-gradient(90deg, transparent 2px, #5c5c5c 2px 3px, transparent 3px), repeating-linear-gradient(#b4b4b4 0 2px, transparent 2px 3px); margin-right: 6px; }
.cx { width: 10px; height: 10px; color: #eee; margin-right: 9px; }
.wrench { width: 15px; height: 16px; }
.cmdinput { flex: 1; background: #fff; display: flex; align-items: center; padding: 0 3px 0 8px; color: #000; }
.pr { width: 9px; height: 16px; margin-right: 6px; }
.cmdinput .car { border-top-color: #888; margin-right: 7px; }
.cmdinput b { font-family: "DejaVu Sans Mono", monospace; font-size: 11.630px; flex: 1; }
.up { border: 4px solid transparent; border-bottom-color: #111; border-top: 0; }

.status { height: 28px; flex: none; background: #383838; border-top: 1px solid #5c5c5c; display: flex; justify-content: space-between; padding: 0 5px 0 10px; }
.ltabs { display: flex; }
.lt { position: relative; width: 65px; height: 17px; display: flex; justify-content: center; color: #b4b4b4; line-height: 16px; }
.lt svg { position: absolute; left: 0; top: 0; width: 66px; height: 18px; fill: #5c5c5c; stroke: #6c6c6c; }
.lt.m { width: 61px; }
.lt.m svg { width: 62px; fill: url(#tabbot); }
.lt span { position: relative; letter-spacing: -.35px; padding-right: 3px; }
.lt.on span { color: #fff; font-weight: 700; letter-spacing: -.3px; padding: 0; }
.plus { width: 24px; height: 17px; margin-left: 2px; }
.msg { line-height: 26px; letter-spacing: -.25px; color: #fff; }
.edge { height: 2px; display: flex; background: #141414; }
.edge i { width: 48px; }
.edge b { width: 352px; background: #484848; }
.edge .e2 { width: 336px; }
.edge .e3 { width: 45px; background: #333; }
```
FILE: grid.js
```js
// Rotated drafting grid: major lines every 77.7px, five minor cells per major.
(function () {
  var ns = "http://www.w3.org/2000/svg";
  var ox = 555.7, oy = 462, size = 77.7, a = 22.15 * Math.PI / 180;
  var c = Math.cos(a), s = Math.sin(a), step = size / 5, far = 1500;
  var minor = "", major = "";
  for (var i = -60; i <= 70; i++) {
    var d = i * step;
    var x = ox + d * c, y = oy - d * s;
    var p = "M" + (x - far * s) + " " + (y - far * c) + "L" + (x + far * s) + " " + (y + far * c);
    x = ox + d * s; y = oy + d * c;
    p += "M" + (x - far * c) + " " + (y + far * s) + "L" + (x + far * c) + " " + (y - far * s);
    if (i % 5 === 0) { major += p; } else { minor += p; }
  }
  [["minor", minor], ["major", major]].forEach(function (g) {
    var path = document.createElementNS(ns, "path");
    path.setAttribute("d", g[1]);
    document.getElementById(g[0]).appendChild(path);
  });
})();
```
